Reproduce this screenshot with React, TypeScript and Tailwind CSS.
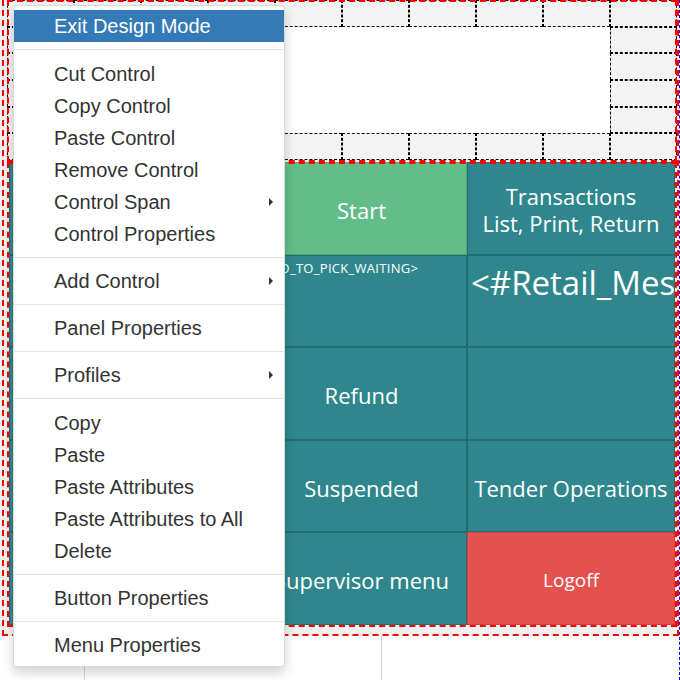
import React from "react";

const cellTop = "bg-[#f3f3f3] border border-dashed border-black";

function TopPanel() {
  const cells: React.ReactNode[] = [];
  for (let r = 0; r < 6; r++) {
    for (let c = 0; c < 10; c++) {
      const perimeter = r === 0 || r === 5 || c === 0 || c === 9;
      if (perimeter) {
        cells.push(
          <div
            key={`${r}-${c}`}
            className={cellTop}
            style={{ gridRow: r + 1, gridColumn: c + 1 }}
          />
        );
      }
    }
  }
  return (
    <div className="relative h-[162px] pb-[2px] outline-2 outline-dashed outline-[#ff0000] -outline-offset-2">
      <div className="grid h-full grid-cols-10 grid-rows-6 bg-white">
        {cells}
      </div>
    </div>
  );
}

const teal = "bg-[#2f878d] border border-[#236c72]";
const btnFont = "font-['Open_Sans','Noto_Sans',sans-serif] text-white";
const center = "flex items-center justify-center pt-[4px] text-[22px]";

function ButtonGrid() {
  return (
    <div className="h-[465px] px-[2px] pb-[2px] outline-2 outline-dashed outline-[#ff0000] -outline-offset-2">
      <div className={`grid h-full grid-cols-[247px_211px_208px] grid-rows-5 ${btnFont}`}>
        <div className={teal} />
        <div className={`${center} border border-[#52a876] bg-[#63bd89]`}>Start</div>
        <div className={`${teal} flex flex-col items-center justify-center pt-[4px] text-[22px] leading-[27px]`}>
          <span>Transactions</span>
          <span>List, Print, Return</span>
        </div>

        <div className={teal} />
        <div className={`${teal} overflow-hidden whitespace-nowrap pl-[5px] pt-[4px] text-[13px] leading-[16px] tracking-[0.3px]`}>
          &lt;GO_TO_PICK_WAITING&gt;
        </div>
        <div className={`${teal} overflow-hidden whitespace-nowrap pl-[3px] pt-[4px] text-[33px] leading-[46px]`}>
          &lt;#Retail_Message&gt;
        </div>

        <div className={teal} />
        <div className={`${teal} ${center}`}>Refund</div>
        <div className={teal} />

        <div className={teal} />
        <div className={`${teal} ${center}`}>Suspended</div>
        <div className={`${teal} ${center}`}>Tender Operations</div>

        <div className={teal} />
        <div className={`${teal} ${center}`}>Supervisor menu</div>
        <div className="flex items-center justify-center border border-[#c94442] bg-[#e5514f] pt-[4px] text-[19px]">
          Logoff
        </div>
      </div>
    </div>
  );
}

type Item = { label: string; sub?: boolean; active?: boolean } | { divider: number };

const items: Item[] = [
  { label: "Exit Design Mode", active: true },
  { divider: 8 },
  { label: "Cut Control" },
  { label: "Copy Control" },
  { label: "Paste Control" },
  { label: "Remove Control" },
  { label: "Control Span", sub: true },
  { label: "Control Properties" },
  { divider: 7 },
  { label: "Add Control", sub: true },
  { divider: 7 },
  { label: "Panel Properties" },
  { divider: 7 },
  { label: "Profiles", sub: true },
  { divider: 8 },
  { label: "Copy" },
  { label: "Paste" },
  { label: "Paste Attributes" },
  { label: "Paste Attributes to All" },
  { label: "Delete" },
  { divider: 7 },
  { label: "Button Properties" },
  { divider: 7 },
  { label: "Menu Properties" },
];

function ContextMenu() {
  return (
    <div className="absolute left-[13px] top-[5px] w-[272px] rounded-[4px] border border-[rgba(0,0,0,0.15)] bg-white pt-[4px] pb-[5px] font-['Liberation_Sans',Arial,sans-serif] text-[20px] text-[#333] shadow-[0_6px_12px_rgba(0,0,0,0.175)]">
      {items.map((it, i) =>
        "divider" in it ? (
          <div
            key={i}
            className={`${it.divider === 8 ? "mt-[7px] mb-[8px]" : "my-[7px]"} h-px bg-[#e5e5e5]`}
          />
        ) : (
          <div
            key={i}
            className={`relative h-[32px] whitespace-nowrap pl-[40px] leading-[32px] ${
              it.active ? "bg-[#337ab7] text-white" : ""
            }`}
          >
            {it.label}
            {it.sub && (
              <span className="absolute right-[11px] top-[12px] h-0 w-0 border-y-[4px] border-l-[4px] border-y-transparent border-l-[#333]" />
            )}
          </div>
        )
      )}
    </div>
  );
}

export default function App() {
  return (
    <div className="relative h-[680px] w-[680px] overflow-hidden border-r border-dashed border-[#0000ff] bg-white">
      <div className="h-[636px] bg-[#f0f0f0] pl-[2px]">
        <div className="h-full border-2 border-t-0 border-dashed border-[#ff0000] pl-[3px]">
          <TopPanel />
          <ButtonGrid />
        </div>
      </div>
      <div className="flex h-[44px]">
        <div className="w-[84px]" />
        <div className="w-[297px] border-l border-[#cfd3d7]" />
        <div className="flex-1 border-l border-[#cfd3d7]" />
      </div>
      <ContextMenu />
    </div>
  );
}
